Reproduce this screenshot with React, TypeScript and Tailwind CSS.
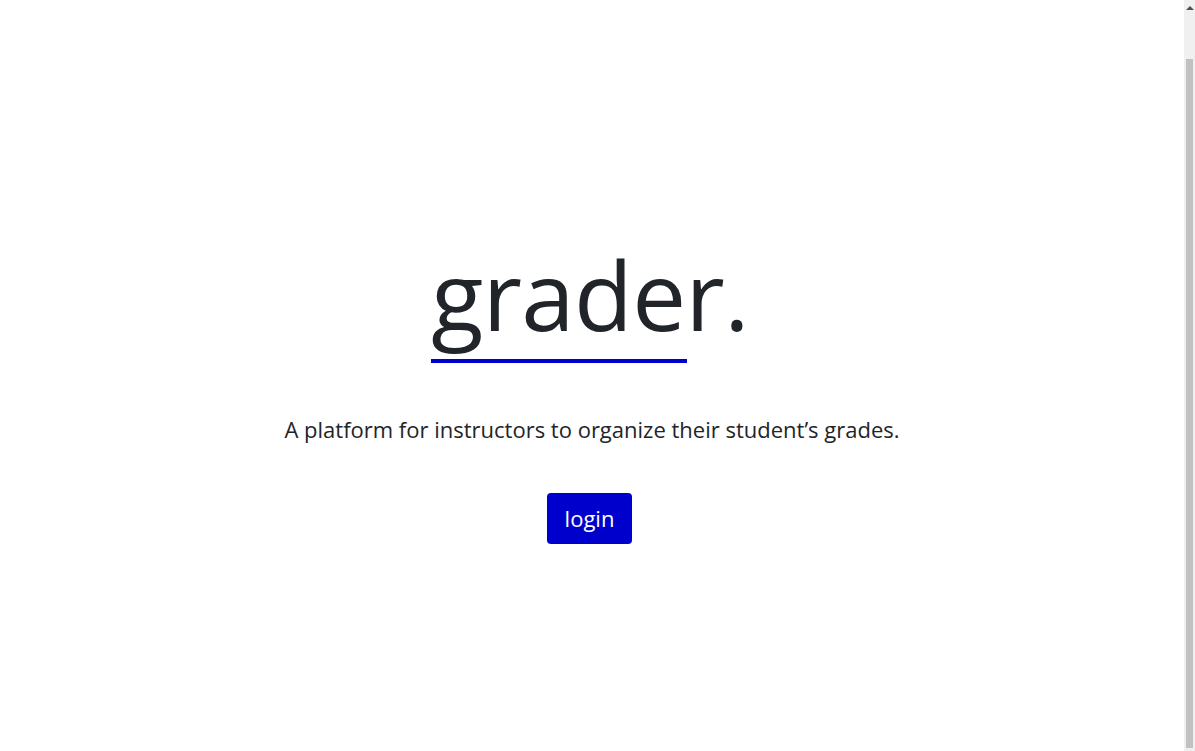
export default function App() {
  return (
    <div className="flex h-[751px] w-full overflow-hidden bg-white" style={{ fontFamily: '"Open Sans", Lato, sans-serif' }}>
      <main className="flex flex-1 flex-col items-center pt-[236px] text-[#212529]">
        <div className="mr-[4px] flex flex-col items-start">
          <h1 className="text-[96px] font-normal leading-[1.2] tracking-[-0.6px]">grader.</h1>
          <div className="mt-[8px] h-[4px] w-[256px] bg-[#0000cd]" />
        </div>
        <p className="mt-[50px] text-[22px] leading-[1.5]">
          A platform for instructors to organize their student’s grades.
        </p>
        <button className="mr-[5px] mt-[47px] h-[51px] w-[85px] rounded-[4px] bg-[#0000cd] text-[22px] text-white">
          login
        </button>
      </main>
      <div className="flex w-[11px] flex-col bg-[#f0f0f0]">
        <div className="flex h-[17px] items-start justify-center pt-[6px]">
          <div className="h-0 w-0 border-x-[4px] border-b-[4px] border-x-transparent border-b-[#505050]" />
        </div>
        <div className="mx-[2px] mt-[42px] h-[689px] bg-[#c1c1c1]" />
      </div>
    </div>
  )
}
